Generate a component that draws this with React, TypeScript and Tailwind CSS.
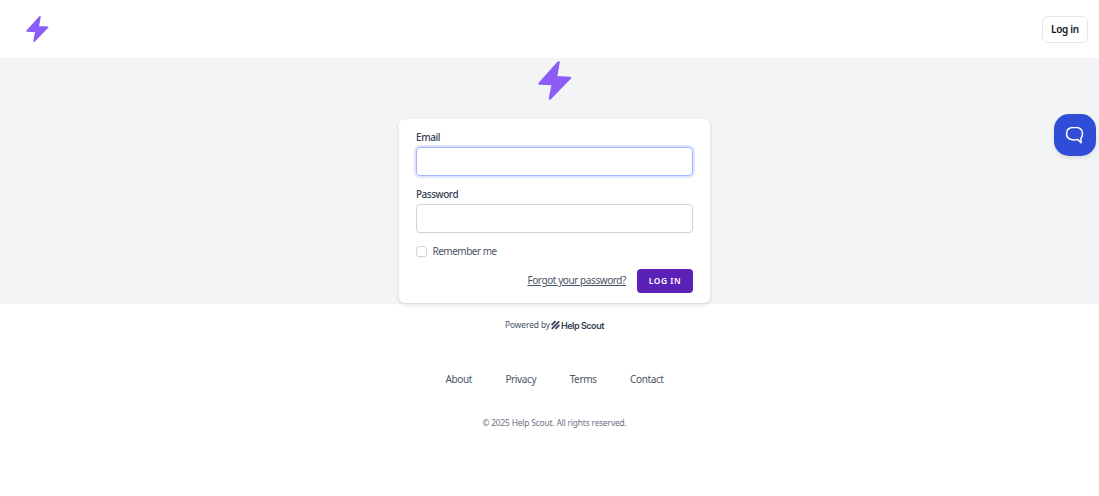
import React from "react"

const Bolt: React.FC<{ className: string }> = ({ className }) => {
  return (
    <svg viewBox="0 0 34 40" className={className} fill="#8b5cf6" stroke="#8b5cf6" strokeWidth="2.4" strokeLinejoin="round">
      <path d="M20.6 1.9 L1.5 23 L14.8 23.6 L12 38 L32 17.4 L18 16.6 Z" />
    </svg>
  )
}

const HelpScoutLogo: React.FC = () => {
  return (
    <span className="flex items-center text-[#314155]">
      <svg viewBox="0 0 10 10" className="mr-[1px] h-[10px] w-[9px]" fill="none" stroke="currentColor" strokeWidth="1.9">
        <path d="M0.7 5.2 L5 0.7 M0.9 9.3 L9.1 0.9 M5 9.4 L9.3 4.9" />
      </svg>
      <span className="pt-px font-['Inter',sans-serif] text-[9px] font-semibold tracking-[-0.46px]">Help Scout</span>
    </span>
  )
}

const Header: React.FC = () => {
  return (
    <header className="flex h-[58px] items-center justify-between bg-white pl-[26px] pr-[11px]">
      <Bolt className="h-[28px] w-[23px]" />
      <a
        href="#"
        className="flex h-[27px] w-[46px] items-center justify-center rounded-[6px] border border-gray-200 pt-px text-[10px] font-semibold tracking-[-0.3px] text-gray-900"
      >
        Log in
      </a>
    </header>
  )
}

const LoginCard: React.FC = () => {
  return (
    <form className="h-[184px] w-[311px] rounded-[6px] bg-white px-[17px] pt-[11px] shadow-[0_2px_4px_rgba(0,0,0,0.12)]">
      <label htmlFor="email" className="block h-[14px] text-[10px] leading-[15px] font-medium tracking-[-0.4px] text-gray-700">
        Email
      </label>
      <input
        id="email"
        type="email"
        className="mt-[3px] block h-[29px] w-full rounded-[4px] border border-[#a5b4fc] shadow-[0_0_0_2px_#e0e7ff] outline-none"
      />
      <label
        htmlFor="password"
        className="mt-[11px] block h-[14px] text-[10px] leading-[15px] font-medium tracking-[-0.48px] text-gray-700"
      >
        Password
      </label>
      <input
        id="password"
        type="password"
        className="mt-[3px] block h-[29px] w-full rounded-[4px] border border-gray-300 shadow-[0_1px_1px_rgba(0,0,0,0.04)] outline-none"
      />
      <label className="mt-[11px] flex h-[14px] items-center">
        <input
          type="checkbox"
          className="h-[11px] w-[11px] appearance-none rounded-[3px] border border-gray-300 shadow-[0_1px_1px_rgba(0,0,0,0.04)]"
        />
        <span className="ml-[5.5px] text-[10px] tracking-[-0.5px] text-gray-600">Remember me</span>
      </label>
      <div className="mt-[11px] flex h-[24px] items-center justify-end">
        <a href="#" className="pb-px text-[10px] tracking-[-0.42px] whitespace-nowrap text-gray-600 underline">
          Forgot your password?
        </a>
        <button
          type="button"
          className="ml-[11px] flex h-[24px] w-[56px] items-center justify-center rounded-[4px] bg-[#5b21b6] text-[8.4px] font-semibold tracking-[0.6px] text-white"
        >
          LOG IN
        </button>
      </div>
    </form>
  )
}

const Footer: React.FC = () => {
  return (
    <footer className="flex flex-col items-center">
      <div className="mt-[14px] flex h-[14px] items-center text-[8.4px] tracking-[-0.1px] text-gray-600">
        <span className="mr-px">Powered by</span>
        <HelpScoutLogo />
      </div>
      <nav className="mt-[40px] flex h-[14px] items-center gap-[33.5px] text-[10px] tracking-[-0.38px] text-gray-600">
        <a href="#">About</a>
        <a href="#">Privacy</a>
        <a href="#">Terms</a>
        <a href="#">Contact</a>
      </nav>
      <p className="mt-[30px] text-[8.4px] leading-[14px] tracking-[-0.17px] text-gray-500">© 2025 Help Scout. All rights reserved.</p>
    </footer>
  )
}

const App: React.FC = () => {
  return (
    <div className="relative h-[496px] overflow-hidden bg-white font-['Noto_Sans',sans-serif]">
      <Header />
      <main className="flex h-[246px] flex-col items-center bg-gray-100 pl-[10px] pt-[2px]">
        <Bolt className="ml-px h-[41px] w-[34px]" />
        <div className="mt-[18px]">
          <LoginCard />
        </div>
      </main>
      <div className="pl-[10px]">
        <Footer />
      </div>
      <button
        type="button"
        aria-label="Open chat"
        className="absolute top-[114px] right-[3px] flex h-[42px] w-[42px] items-center justify-center rounded-[15px] bg-[#304dd8] shadow-[0_2px_4px_rgba(0,0,0,0.1)]"
      >
        <svg viewBox="0 0 18 18" className="mr-px h-[18px] w-[19px]" fill="none" stroke="white" strokeWidth="1.5" strokeLinejoin="round">
          <path d="M9 1.2 C3.2 1.2 1 3 1 7.5 C1 12 3.2 13.9 9 13.9 C10.4 13.9 11.5 13.8 12.4 13.6 L15.6 16.8 L15.4 12.2 C16.5 11.2 17 9.7 17 7.5 C17 3 14.8 1.2 9 1.2 Z" />
        </svg>
      </button>
    </div>
  )
}

export default App
